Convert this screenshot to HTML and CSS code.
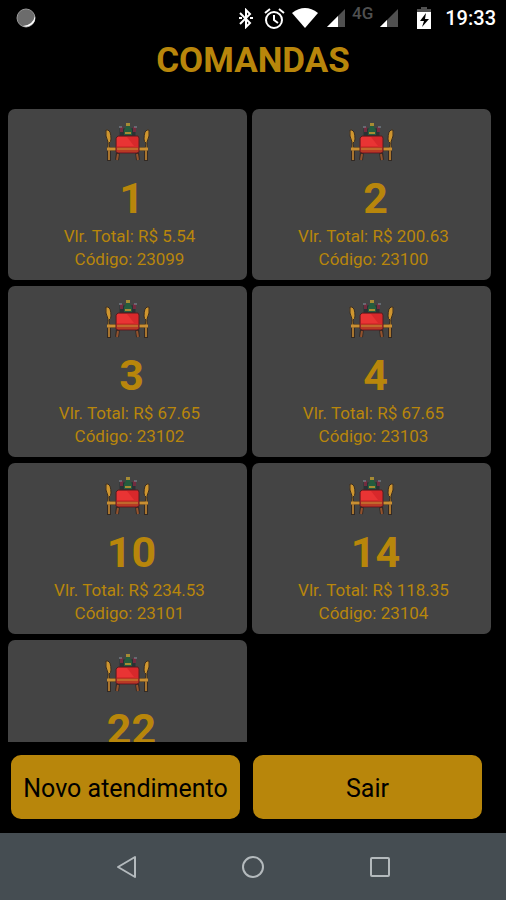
FILE: index.html
```html
<!DOCTYPE html>
<html lang="pt-br">
<head>
    <meta charset="UTF-8">
    <meta name="viewport" content="width=device-width, initial-scale=1.0">
    <title>Comandas</title>
    <link rel="stylesheet" href="styles.css">
</head>
<body>

    <!-- Desenho da mesa usado em todos os cards -->
    <svg class="sprite" aria-hidden="true">
        <symbol id="mesa" viewBox="0 0 48 40">
            <g fill="none" stroke="#332a24" stroke-width="4">
                <path d="M3 27h41M5 27v12M14 30l-1 8M33 30l1 8M42 27v12"/>
            </g>
            <path d="M2 8q2-1 4 2 1 3 1 7 0 3-2 4l1 6H4V20Q1 14 2 8zM45 8q-2-1-4 2-1 3-1 7 0 3 2 4l-1 6h2v-7q3-6 2-12z" fill="#cf962f" stroke="#3a2d20"/>
            <path d="M3 27h10M34 27h10" stroke="#c98f32" stroke-width="3"/>
            <path d="M5 28v10M42 28v10" stroke="#a8752f" stroke-width="2"/>
            <path d="M14 32l-1 6M33 32l1 6" stroke="#94522d" stroke-width="2"/>
            <path d="M17 6v8M30 6v8M20 8h8v6h-8z" stroke="#2a3234" stroke-width="3" fill="#2a3234"/>
            <path d="M16 5h3v5h-3zM29 5h3v5h-3z" fill="#722c3f"/>
            <path d="M15 5h3M30 5h3" stroke="#8292a0"/>
            <path d="M22 1h4v4l2 3v5h-8V8l2-3z" fill="#245c3e"/>
            <path d="M22 1h4v3h-4zM21 10h6v2h-6z" fill="#a68b34"/>
            <path d="M14 14h20l1 2v14l-2 1H14l-2-1V16z" fill="#d8282b" stroke="#541f20"/>
            <path d="M14 15h9l7 9H13v-8z" fill="#e93434"/>
            <path d="M13 25h21v5H13z" fill="#b83a24"/>
            <path d="M13 27h21" stroke="#c2672c" stroke-width="2"/>
        </symbol>
    </svg>

    <div class="app">
        <header class="status">
            <svg class="lua" width="20" height="20" viewBox="0 0 20 20">
                <circle cx="10" cy="10" r="9" fill="#6c6c6c" stroke="#999" stroke-width="1"/>
                <path d="M19 8A9 9 0 0 1 7 18Q17 17 19 8z" fill="#fff"/>
            </svg>
            <svg width="14" height="21" viewBox="0 0 14 21" fill="none" stroke="#fff" stroke-width="2">
                <path d="M1 5l10 10-4 4V2l4 4L1 16"/>
                <path d="M0 10h3M11 10h3"/>
            </svg>
            <svg class="alarme" width="21" height="21" viewBox="0 0 21 21" fill="none" stroke="#fff" stroke-width="2">
                <circle cx="10" cy="12" r="8"/>
                <path d="M1 5l5-4M15 1l5 4M10 7v5l4 3"/>
            </svg>
            <svg width="26" height="20" viewBox="0 0 26 20">
                <path d="M0 5Q13-5 26 5L13 20z" fill="#fff"/>
            </svg>
            <svg class="sinal" width="18" height="18" viewBox="0 0 18 18">
                <path d="M18 0v18H0z" fill="#505050"/>
                <path d="M11 7v11H0z" fill="#fff"/>
            </svg>
            <span class="rede">4G</span>
            <svg width="18" height="18" viewBox="0 0 18 18">
                <path d="M18 0v18H0z" fill="#505050"/>
                <path d="M7 11v7H0z" fill="#fff"/>
            </svg>
            <svg class="bateria" width="14" height="22" viewBox="0 0 14 22">
                <path d="M4 0h6v2h4v4H0V2h4z" fill="#505050"/>
                <path d="M0 5h14v17H0z" fill="#fff"/>
                <path d="M9 6l-6 8h4l-2 6 7-8H8z" fill="#000"/>
            </svg>
            <time class="hora">19:33</time>
        </header>

        <h1>COMANDAS</h1>

        <main class="comandas">
            <article class="card">
                <svg class="mesa"><use href="#mesa"/></svg>
                <h2>1</h2>
                <p>Vlr. Total: R$ 5.54</p>
                <p>Código: 23099</p>
            </article>
            <article class="card">
                <svg class="mesa"><use href="#mesa"/></svg>
                <h2>2</h2>
                <p>Vlr. Total: R$ 200.63</p>
                <p>Código: 23100</p>
            </article>
            <article class="card">
                <svg class="mesa"><use href="#mesa"/></svg>
                <h2>3</h2>
                <p>Vlr. Total: R$ 67.65</p>
                <p>Código: 23102</p>
            </article>
            <article class="card">
                <svg class="mesa"><use href="#mesa"/></svg>
                <h2>4</h2>
                <p>Vlr. Total: R$ 67.65</p>
                <p>Código: 23103</p>
            </article>
            <article class="card">
                <svg class="mesa"><use href="#mesa"/></svg>
                <h2>10</h2>
                <p>Vlr. Total: R$ 234.53</p>
                <p>Código: 23101</p>
            </article>
            <article class="card">
                <svg class="mesa"><use href="#mesa"/></svg>
                <h2>14</h2>
                <p>Vlr. Total: R$ 118.35</p>
                <p>Código: 23104</p>
            </article>
            <article class="card">
                <svg class="mesa"><use href="#mesa"/></svg>
                <h2>22</h2>
            </article>
        </main>

        <div class="acoes">
            <button type="button">Novo atendimento</button>
            <button type="button">Sair</button>
        </div>

        <nav class="navegacao">
            <button type="button" aria-label="Voltar">
                <svg width="22" height="24" viewBox="0 0 22 24"><path d="M19 2v20L2 12z"/></svg>
            </button>
            <button type="button" aria-label="Início">
                <svg width="24" height="24" viewBox="0 0 24 24"><circle cx="12" cy="12" r="10"/></svg>
            </button>
            <button type="button" aria-label="Recentes">
                <svg width="22" height="22" viewBox="0 0 22 22"><rect x="2" y="2" width="18" height="18" rx="1"/></svg>
            </button>
        </nav>
    </div>

</body>
</html>
```
FILE: styles.css
```css
* {
    box-sizing: border-box;
}
body {
    margin: 0;
    background-color: #000;
    color: #b8860b;
    font-family: Roboto, Arial, sans-serif;
}
h1, h2, p {
    margin: 0;
}
.sprite {
    display: none;
}
.app {
    display: flex;
    flex-direction: column;
    height: 100vh;
}

/* Barra de status */
.status {
    display: flex;
    align-items: center;
    gap: 7px;
    height: 36px;
    padding: 0 10px 0 16px;
    color: #fff;
}
.status svg {
    flex: none;
}
.status .lua {
    margin-right: auto;
}
.status .alarme {
    margin-left: 4px;
}
.status .sinal {
    margin-left: 2px;
}
.rede {
    align-self: flex-start;
    padding-top: 3px;
    color: #505050;
    font-size: 17px;
    font-weight: 500;
}
.status .bateria {
    margin: 0 7px 0 12px;
}
.hora {
    font-size: 20px;
    font-weight: 500;
}

h1 {
    height: 73px;
    font-size: 35px;
    line-height: 50px;
    text-align: center;
}

/* Lista de comandas */
.comandas {
    flex: 1;
    min-height: 0;
    overflow: hidden;
    display: grid;
    grid-template-columns: 1fr 1fr;
    grid-auto-rows: 171px;
    gap: 6px 5px;
    padding: 0 15px 0 8px;
}
.card {
    padding-top: 13px;
    background-color: #444;
    border-radius: 7px;
    text-align: center;
}
.mesa {
    display: block;
    width: 48px;
    height: 40px;
    margin: 0 auto 10px;
}
.card h2 {
    padding-left: 8px;
    font-size: 43px;
    line-height: 53px;
}
.card p {
    padding-left: 4px;
    font-size: 17px;
    line-height: 23px;
}

/* Botões */
.acoes {
    display: flex;
    gap: 13px;
    padding: 13px 24px 14px 11px;
}
.acoes button {
    flex: 1 1 0;
    height: 64px;
    padding: 2px 0 0;
    border: 0;
    border-radius: 10px;
    background-color: #b8860b;
    color: #000;
    font-family: inherit;
    font-size: 25px;
    white-space: nowrap;
}

.navegacao {
    display: flex;
    justify-content: space-around;
    align-items: center;
    height: 67px;
    padding: 0 12.5%;
    background-color: #454d52;
}
.navegacao button {
    display: flex;
    justify-content: center;
    width: 24px;
    padding: 0;
    border: 0;
    background: none;
}
.navegacao svg {
    fill: none;
    stroke: #b4babd;
    stroke-width: 2;
    stroke-linejoin: round;
}
```
